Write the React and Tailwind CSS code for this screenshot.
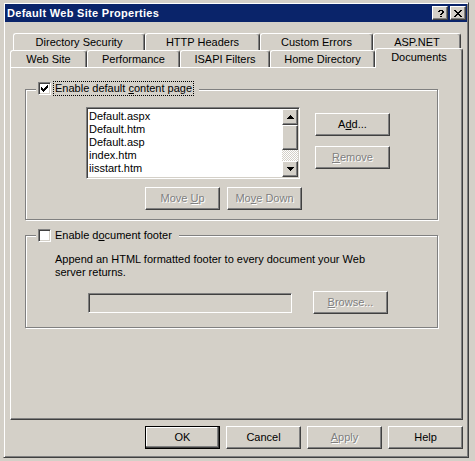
import React from "react";

function pix(rows) {
  let d = "";
  rows.forEach((r, y) => {
    for (let x = 0; x < r.length; x++) {
      if (r[x] === "#") d += `M${x} ${y}h1v1h-1z`;
    }
  });
  return d;
}

const Glyph = ({ rows, color = "#000" }) => (
  <svg
    width={rows[0].length}
    height={rows.length}
    viewBox={`0 0 ${rows[0].length} ${rows.length}`}
    shapeRendering="crispEdges"
    className="block"
  >
    <path d={pix(rows)} fill={color} />
  </svg>
);

const CHECK = ["......#", ".....##", "#...###", "##.###.", "#####..", ".###...", "..#...."];
const QMARK = [".####.", "##..##", "....##", "...##.", "..##..", "......", "..##.."];
const XMARK = ["##....##", ".##..##.", "..####..", "...##...", "..####..", ".##..##.", "##....##"];
const UP = ["...#...", "..###..", ".#####.", "#######"];
const DOWN = ["#######", ".#####.", "..###..", "...#..."];

const raised =
  "bg-[#d4d0c8] border border-t-white border-l-white border-r-[#404040] border-b-[#404040] shadow-[inset_-1px_-1px_#808080]";

function Btn({ children, def, disabled, className = "" }) {
  const base = def
    ? "bg-[#d4d0c8] border border-black shadow-[inset_-1px_-1px_#404040,inset_-2px_-2px_#808080,inset_1px_1px_#fff]"
    : raised;
  return (
    <div
      className={`${base} w-[75px] h-[23px] flex items-center justify-center shrink-0 ${
        disabled ? "text-[#808080] [text-shadow:1px_1px_0_#fff]" : "text-black"
      } ${className}`}
    >
      <span className="whitespace-pre">{children}</span>
    </div>
  );
}

function CheckBox({ checked }) {
  return (
    <div className="w-[13px] h-[13px] bg-white border border-t-[#808080] border-l-[#808080] border-r-white border-b-white shadow-[inset_1px_1px_#404040,inset_-1px_-1px_#d4d0c8] flex items-center justify-center shrink-0">
      {checked && <Glyph rows={CHECK} />}
    </div>
  );
}

function Tab({ w, children, selected }) {
  return (
    <div
      style={{ width: w }}
      className={`shrink-0 flex items-center justify-center bg-[#d4d0c8] rounded-t-[3px] border-t border-l border-r border-t-white border-l-white border-r-[#404040] shadow-[inset_-1px_0_#808080] ${
        selected ? "h-[20px] mb-[-1px] relative z-10 pb-[3px]" : "h-full"
      }`}
    >
      <span>{children}</span>
    </div>
  );
}

const etched =
  "border border-[#808080] shadow-[inset_1px_1px_#fff,1px_1px_#fff]";

export default function App() {
  const files = ["Default.aspx", "Default.htm", "Default.asp", "index.htm", "iisstart.htm", "index.html"];
  return (
    <div className="w-[475px] h-[461px] overflow-hidden bg-[#d4d0c8] pt-[2px] pl-[3px] text-[11px] leading-[13px] text-black [font-family:'Liberation_Sans',Arial,sans-serif]">
      <div className="w-[466px] h-[456px] border border-[#d4d0c8] border-r-[#404040] border-b-[#404040] shadow-[inset_1px_1px_#fff,inset_-1px_-1px_#808080] p-[1px] flex flex-col">
        {/* Title bar */}
        <div className="h-[18px] bg-[#0a246a] flex items-center pl-[2px] pr-[1px] shrink-0">
          <div className="text-white font-bold flex-1 tracking-[0.3px]">Default Web Site Properties</div>
          <div className="flex gap-[2px]">
            <div className={`${raised} w-[16px] h-[14px] flex items-center justify-center pl-[1px]`}>
              <Glyph rows={QMARK} />
            </div>
            <div className={`${raised} w-[16px] h-[14px] flex items-center justify-center`}>
              <Glyph rows={XMARK} />
            </div>
          </div>
        </div>

        {/* Body */}
        <div className="pl-[5px] pt-[11px] flex flex-col">
          {/* Tabs row 1 */}
          <div className="h-[17px] flex ml-[3px]">
            <Tab w={132}>Directory Security</Tab>
            <Tab w={115}>HTTP Headers</Tab>
            <Tab w={113}>Custom Errors</Tab>
            <Tab w={88}>ASP.NET</Tab>
          </div>
          {/* Tabs row 2 */}
          <div className="h-[17px] flex items-end">
            <Tab w={77}>Web Site</Tab>
            <Tab w={93}>Performance</Tab>
            <Tab w={90}>ISAPI Filters</Tab>
            <Tab w={105}>Home Directory</Tab>
            <Tab w={88} selected>
              Documents
            </Tab>
          </div>

          {/* Panel */}
          <div className="w-[453px] h-[353px] border border-t-white border-l-white border-r-[#404040] border-b-[#404040] shadow-[inset_-1px_-1px_#808080] pl-[14px] pt-[21px] flex flex-col">
            {/* Group 1 */}
            <div className={`${etched} w-[413px] h-[131px] flex flex-col`}>
              <div className="flex items-center self-start mt-[-8px] ml-[10px] pl-[2px] pr-[5px] bg-[#d4d0c8] h-[13px]">
                <CheckBox checked />
                <div className="ml-[2px] pl-[1px] pr-[1px] border border-dotted border-black h-[15px] leading-[13px]">
                  Enable default <span className="underline">c</span>ontent page
                </div>
              </div>
              <div className="flex mt-[12px]">
                <div className="ml-[60px] flex flex-col">
                  {/* Listbox */}
                  <div className="w-[214px] h-[72px] bg-white border border-t-[#808080] border-l-[#808080] border-r-white border-b-white shadow-[inset_1px_1px_#404040,inset_-1px_-1px_#d4d0c8] p-[1px] flex">
                    <div className="flex-1 overflow-hidden pl-[1px] pt-[1px]">
                      {files.map((f) => (
                        <div key={f} className="h-[13px] leading-[13px] whitespace-nowrap">
                          {f}
                        </div>
                      ))}
                    </div>
                    <div className="w-[16px] flex flex-col">
                      <div className={`${raised} h-[16px] flex items-center justify-center`}>
                        <Glyph rows={UP} />
                      </div>
                      <div className={`${raised} h-[25px]`} />
                      <div className="h-[11px] bg-[repeating-conic-gradient(#fff_0_25%,#d4d0c8_0_50%)] bg-[length:2px_2px]" />
                      <div className={`${raised} h-[16px] flex items-center justify-center`}>
                        <Glyph rows={DOWN} />
                      </div>
                    </div>
                  </div>
                  <div className="flex gap-[7px] mt-[8px] ml-[59px]">
                    <Btn disabled>
                      {"Move "}
                      <span className="underline">U</span>p
                    </Btn>
                    <Btn disabled>
                      Mo<span className="underline">v</span>
                      {"e Down"}
                    </Btn>
                  </div>
                </div>
                <div className="ml-[13px] mt-[6px] flex flex-col gap-[10px]">
                  <Btn>
                    A<span className="underline">d</span>d...
                  </Btn>
                  <Btn disabled>
                    <span className="underline">R</span>emove
                  </Btn>
                </div>
              </div>
            </div>

            {/* Group 2 */}
            <div className={`${etched} w-[413px] h-[93px] mt-[15px] flex flex-col`}>
              <div className="flex items-center self-start mt-[-7px] ml-[10px] pl-[2px] pr-[5px] bg-[#d4d0c8] h-[13px]">
                <CheckBox />
                <div className="ml-[2px] pl-[1px] pr-[1px] border border-transparent h-[15px] leading-[13px]">
                  Enable d<span className="underline">o</span>cument footer
                </div>
              </div>
              <div className="ml-[29px] mt-[11px] leading-[13px]">
                Append an HTML formatted footer to every document your Web
                <br />
                server returns.
              </div>
              <div className="flex items-center mt-[12px]">
                <div className="ml-[62px] w-[204px] h-[20px] bg-[#d4d0c8] border border-t-[#808080] border-l-[#808080] border-r-white border-b-white shadow-[inset_1px_1px_#404040,inset_-1px_-1px_#d4d0c8]" />
                <Btn disabled className="ml-[21px]">
                  <span className="underline">B</span>rowse...
                </Btn>
              </div>
            </div>
          </div>

          {/* Bottom buttons */}
          <div className="w-[453px] flex justify-end gap-[6px] mt-[6px]">
            <Btn def>OK</Btn>
            <Btn>Cancel</Btn>
            <Btn disabled>
              <span className="underline">A</span>pply
            </Btn>
            <Btn>Help</Btn>
          </div>
        </div>
      </div>
    </div>
  );
}
